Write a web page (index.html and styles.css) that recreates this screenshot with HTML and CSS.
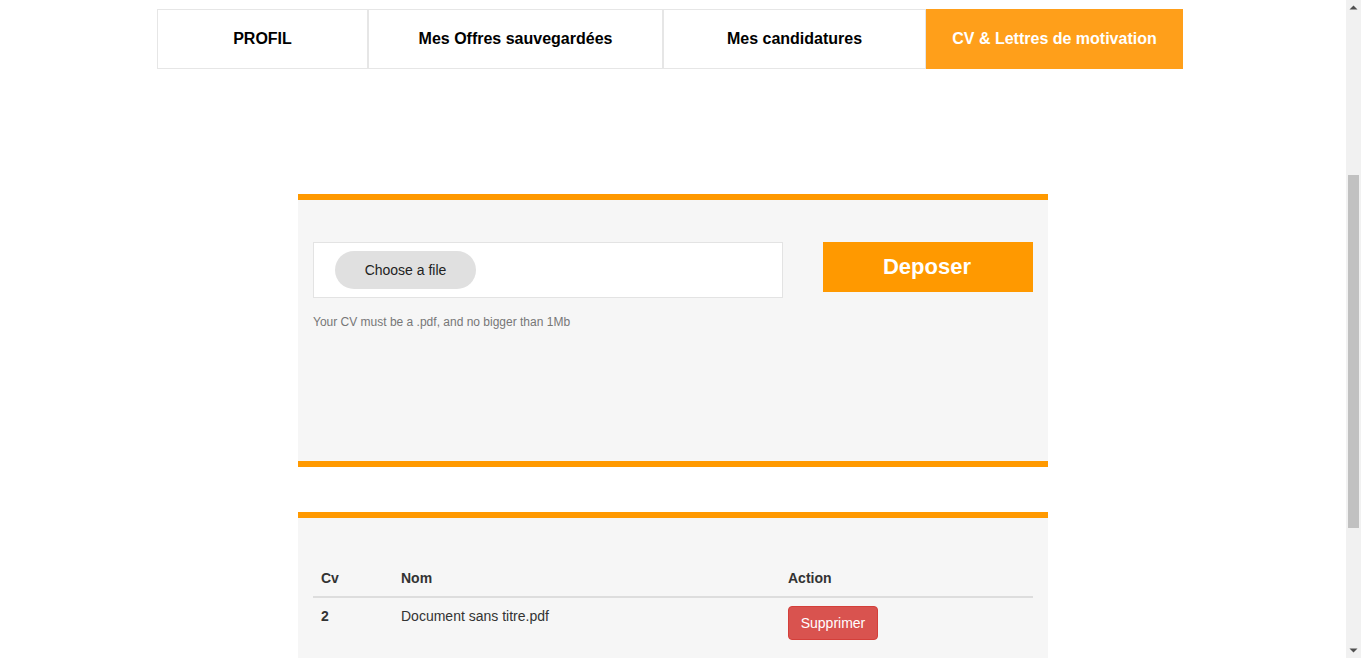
FILE: index.html
```html
<!DOCTYPE html>
<html lang="fr">
<head>
<meta charset="utf-8">
<title>CV & Lettres de motivation</title>
<link rel="stylesheet" href="styles.css">
</head>
<body>
<div class="viewport">
  <main class="page">
    <nav class="tabs">
      <a class="tab tab-1">PROFIL</a>
      <a class="tab tab-2">Mes Offres sauvegardées</a>
      <a class="tab tab-3">Mes candidatures</a>
      <a class="tab tab-4 active">CV &amp; Lettres de motivation</a>
    </nav>

    <section class="panel upload">
      <div class="upload-row">
        <div class="file-box">
          <span class="file-btn">Choose a file</span>
        </div>
        <button class="deposer">Deposer</button>
      </div>
      <p class="help">Your CV must be a .pdf, and no bigger than 1Mb</p>
    </section>

    <section class="panel list">
      <table class="cv-table">
        <thead>
          <tr>
            <th class="c-cv">Cv</th>
            <th class="c-nom">Nom</th>
            <th class="c-action">Action</th>
          </tr>
        </thead>
        <tbody>
          <tr>
            <td class="num">2</td>
            <td>Document sans titre.pdf</td>
            <td><button class="btn-danger">Supprimer</button></td>
          </tr>
        </tbody>
      </table>
    </section>
  </main>
  <div class="scrollbar">
    <svg class="arrow" width="15" height="15" viewBox="0 0 15 15"><polygon points="3.5,9.5 11.5,9.5 7.5,5.5" fill="#505050"/></svg>
    <div class="track"><span class="thumb"></span></div>
    <svg class="arrow" width="15" height="15" viewBox="0 0 15 15"><polygon points="3.5,5.5 11.5,5.5 7.5,9.5" fill="#505050"/></svg>
  </div>
</div>
</body>
</html>
```

FILE: styles.css
```css
* { box-sizing: border-box; }
html, body { margin: 0; padding: 0; }
body {
  font-family: "Liberation Sans", Arial, sans-serif;
  font-size: 14px;
  line-height: 1.42857;
  color: #333;
  background: #fff;
}
.viewport {
  display: flex;
  height: 658px;
  overflow: hidden;
}
.page {
  flex: 1;
  overflow: hidden;
  padding-top: 9px;
}
.tabs {
  display: flex;
  width: 1026px;
  margin-left: 157px;
  height: 60px;
}
.tab {
  display: flex;
  align-items: center;
  justify-content: center;
  border: 1px solid #e6e6e6;
  font-weight: bold;
  font-size: 16px;
  color: #000;
  text-decoration: none;
}
.tab + .tab { border-left: 1px solid #e6e6e6; }
.tab-1 { width: 211px; }
.tab-2 { width: 295px; border-left: 2px solid #e6e6e6; }
.tab-3 { width: 263px; }
.tab-4 { width: 257px; }
.tab.active {
  background: #ff9f1a;
  border-color: #ff9f1a;
  color: #fff;
}

.panel {
  width: 750px;
  margin: 0 auto;
  background: #f6f6f6;
  border-top: 6px solid #ff9900;
}
.upload {
  margin-top: 125px;
  height: 273px;
  border-bottom: 6px solid #ff9900;
  padding: 42px 15px 0;
}
.upload-row {
  display: flex;
  justify-content: space-between;
  align-items: flex-start;
}
.file-box {
  width: 470px;
  height: 56px;
  background: #fff;
  border: 1px solid #e3e3e3;
  padding: 8px 21px;
}
.file-btn {
  display: flex;
  align-items: center;
  justify-content: center;
  width: 141px;
  height: 38px;
  padding-top: 2px;
  border-radius: 19px;
  background: #e0e0e0;
  color: #222;
  font-size: 14px;
}
.deposer {
  width: 210px;
  height: 50px;
  border: none;
  background: #ff9900;
  color: #fff;
  font-family: inherit;
  font-weight: bold;
  font-size: 22px;
  padding: 0 2px 0 0;
}
.help {
  margin: 16px 0 0;
  font-size: 12px;
  color: #777;
}

.list {
  margin-top: 45px;
  height: 160px;
  padding: 42px 15px 0;
}
.cv-table {
  width: 100%;
  border-collapse: collapse;
}
.cv-table th,
.cv-table td {
  padding: 8px;
  text-align: left;
  vertical-align: top;
  line-height: 20px;
}
.cv-table th {
  border-bottom: 2px solid #ddd;
  font-weight: bold;
}
.c-cv { width: 80px; }
.c-nom { width: 387px; }
.num { font-weight: bold; }
.btn-danger {
  display: inline-flex;
  align-items: center;
  justify-content: center;
  width: 90px;
  height: 34px;
  background: #d9534f;
  border: 1px solid #d43f3a;
  border-radius: 4px;
  color: #fff;
  font-family: inherit;
  font-size: 14px;
  padding: 0;
}

.scrollbar {
  width: 15px;
  flex: none;
  background: #f1f1f1;
  display: flex;
  flex-direction: column;
}
.arrow {
  display: block;
  flex: none;
}
.track {
  flex: 1;
  width: 100%;
  padding: 160px 2px 0 2px;
}
.thumb {
  display: block;
  width: 11px;
  height: 353px;
  background: #c1c1c1;
  margin-left: auto;
}
```
